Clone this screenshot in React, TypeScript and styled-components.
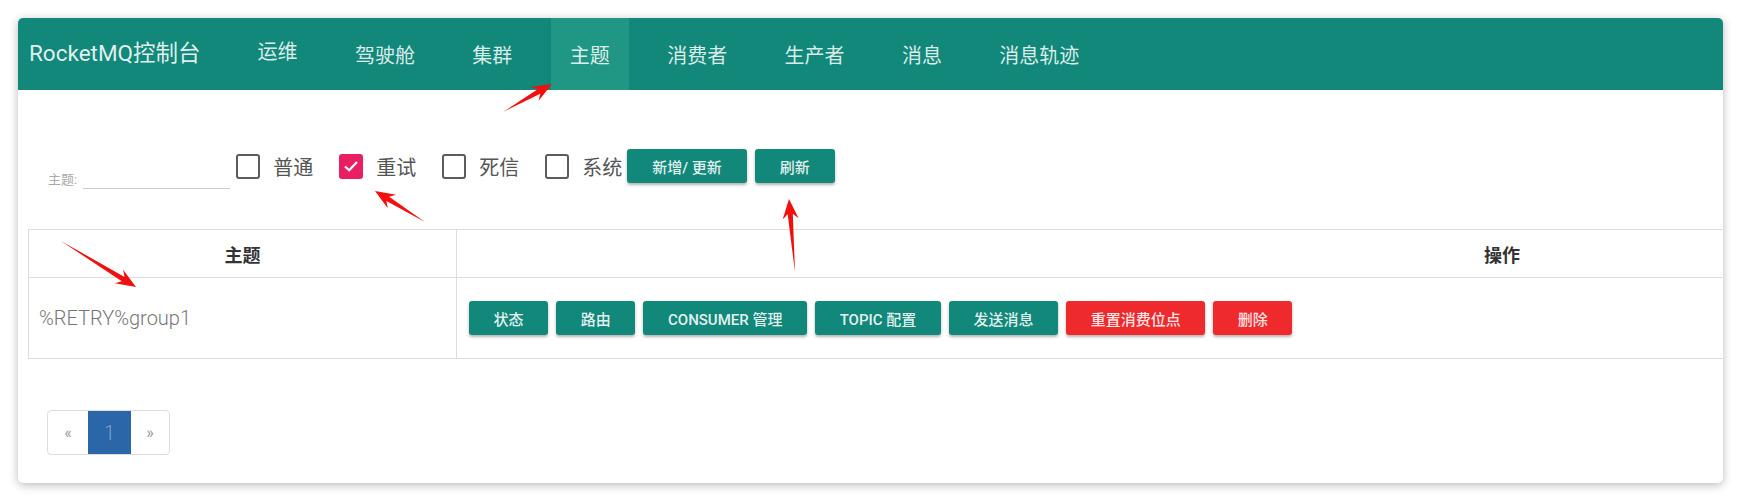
import React from "react";
import styled, { createGlobalStyle, css } from "styled-components";

const GlobalStyle = createGlobalStyle`
  html, body {
    margin: 0;
    padding: 0;
    background: #ffffff;
  }
  body {
    font-family: "Roboto", "Noto Sans CJK SC", sans-serif;
  }
`;

const Page = styled.div`
  position: relative;
  padding: 18px;
  width: 1741px;
  box-sizing: border-box;
`;

const Card = styled.div`
  width: 1705px;
  height: 465px;
  background: #fff;
  border-radius: 5px;
  overflow: hidden;
  box-shadow: 0 2px 10px rgba(0, 0, 0, 0.28);
`;

const Header = styled.div`
  display: flex;
  align-items: stretch;
  height: 72px;
  background: #12887a;
`;

const Brand = styled.div`
  display: flex;
  align-items: center;
  padding: 0 0 6px 11px;
  font-size: 22.5px;
  color: rgba(255, 255, 255, 0.88);
  margin-right: 38px;
`;

const Nav = styled.div`
  display: flex;
  gap: 19.4px;
`;

const NavItem = styled.div<{ active?: boolean; lift?: boolean }>`
  display: flex;
  align-items: center;
  padding: 0 19px;
  font-size: 20px;
  color: rgba(255, 255, 255, 0.85);
  ${(p) =>
    p.lift &&
    css`
      padding-bottom: 8px;
    `}
  ${(p) =>
    p.active &&
    css`
      background: #1f9784;
    `}
`;

const Content = styled.div`
  padding-left: 10px;
`;

const FilterRow = styled.div`
  display: flex;
  align-items: center;
  height: 34px;
  margin: 59px 0 46px 20px;
`;

const Field = styled.div`
  display: flex;
  align-items: flex-end;
  align-self: flex-end;
  margin-bottom: -6px;
  margin-right: 6px;
`;

const FieldLabel = styled.span`
  font-size: 13px;
  color: #aaa;
  margin-right: 6px;
  line-height: 18px;
`;

const FieldInput = styled.div`
  width: 147px;
  height: 18px;
  border-bottom: 1px solid #ccc;
`;

const Check = styled.label`
  display: flex;
  align-items: center;
  gap: 13px;
  margin-right: 26px;
  font-size: 20px;
  color: #555;
  &:last-of-type {
    margin-right: 5px;
  }
`;

const Box = styled.span<{ checked?: boolean }>`
  display: flex;
  align-items: center;
  justify-content: center;
  width: 24px;
  height: 25px;
  box-sizing: border-box;
  border-radius: 3px;
  border: 2px solid #5c5c5c;
  ${(p) =>
    p.checked &&
    css`
      background: #e91e63;
      border-color: #e91e63;
    `}
`;

const Button = styled.button<{ danger?: boolean; compact?: boolean }>`
  height: 34px;
  padding: 0 ${(p) => (p.compact ? 24.6 : 25)}px;
  border: none;
  border-radius: 3px;
  font-family: "Roboto", "Noto Sans CJK SC", sans-serif;
  font-size: 15px;
  font-weight: 500;
  color: rgba(255, 255, 255, 0.9);
  background: ${(p) => (p.danger ? "#ee2a2d" : "#12887a")};
  box-shadow: 0 2px 3px rgba(0, 0, 0, 0.3);
  white-space: nowrap;
  cursor: pointer;
`;

const Buttons = styled.div`
  display: flex;
  gap: 8px;
`;

const Table = styled.table`
  width: 2520px;
  border-collapse: collapse;
  table-layout: fixed;
`;

const Th = styled.th<{ w?: number }>`
  height: 47px;
  padding: 0;
  border: 1px solid #ddd;
  font-size: 18px;
  font-weight: 700;
  color: #333;
  text-align: center;
  ${(p) =>
    p.w &&
    css`
      width: ${p.w}px;
    `}
`;

const Td = styled.td<{ text?: boolean }>`
  height: 80px;
  border: 1px solid #ddd;
  padding: 0 0 0 ${(p) => (p.text ? 10 : 12)}px;
  font-size: 20px;
  font-weight: 300;
  color: #777;
`;

const Pager = styled.div`
  display: inline-flex;
  margin: 51px 0 0 19px;
  border: 1px solid #ddd;
  border-radius: 4px;
  overflow: hidden;
  height: 43px;
`;

const PageCell = styled.div<{ active?: boolean; w: number }>`
  display: flex;
  align-items: center;
  justify-content: center;
  width: ${(p) => p.w}px;
  font-size: 16px;
  color: #999;
  ${(p) =>
    p.active &&
    css`
      background: #2a66a8;
      color: rgba(255, 255, 255, 0.4);
      font-size: 20px;
      font-weight: 300;
    `}
`;

const Overlay = styled.svg`
  position: absolute;
  left: 0;
  top: 0;
  pointer-events: none;
`;

type Pt = [number, number];

const arrowPoints = (tail: Pt, tip: Pt) => {
  const dx = tip[0] - tail[0];
  const dy = tip[1] - tail[1];
  const len = Math.hypot(dx, dy);
  const ux = dx / len;
  const uy = dy / len;
  const nx = -uy;
  const ny = ux;
  const h = 20;
  const w = 8;
  const s = 2.6;
  const at = (d: number, o: number): Pt => [
    tip[0] - ux * d + nx * o,
    tip[1] - uy * d + ny * o,
  ];
  const pts: Pt[] = [
    tail,
    at(h * 0.75, s),
    at(h, w),
    tip,
    at(h, -w),
    at(h * 0.75, -s),
  ];
  return pts.map((p) => p.join(",")).join(" ");
};

const arrows: [Pt, Pt][] = [
  [[503, 112], [552, 84]],
  [[425, 222], [375, 191]],
  [[795, 272], [789, 199]],
  [[61, 241], [136, 287]],
];

const Tick = () => (
  <svg width="18" height="18" viewBox="0 0 18 18">
    <path d="M3 9.5 L7.2 13.2 L15 5" fill="none" stroke="#fff" strokeWidth="2.2" />
  </svg>
);

const navItems = ["运维", "驾驶舱", "集群", "主题", "消费者", "生产者", "消息", "消息轨迹"];
const filters = [
  { label: "普通", checked: false },
  { label: "重试", checked: true },
  { label: "死信", checked: false },
  { label: "系统", checked: false },
];
const actions = [
  { label: "状态" },
  { label: "路由" },
  { label: "CONSUMER 管理" },
  { label: "TOPIC 配置" },
  { label: "发送消息" },
  { label: "重置消费位点", danger: true },
  { label: "删除", danger: true },
];

const App = () => {
  return (
    <Page>
      <GlobalStyle />
      <Card>
        <Header>
          <Brand>RocketMQ控制台</Brand>
          <Nav>
            {navItems.map((item, i) => (
              <NavItem key={item} active={item === "主题"} lift={i === 0}>
                {item}
              </NavItem>
            ))}
          </Nav>
        </Header>
        <Content>
          <FilterRow>
            <Field>
              <FieldLabel>主题:</FieldLabel>
              <FieldInput />
            </Field>
            {filters.map((f) => (
              <Check key={f.label}>
                <Box checked={f.checked}>{f.checked && <Tick />}</Box>
                {f.label}
              </Check>
            ))}
            <Buttons>
              <Button>新增/ 更新</Button>
              <Button>刷新</Button>
            </Buttons>
          </FilterRow>
          <Table>
            <thead>
              <tr>
                <Th w={427}>主题</Th>
                <Th>操作</Th>
              </tr>
            </thead>
            <tbody>
              <tr>
                <Td text>%RETRY%group1</Td>
                <Td>
                  <Buttons>
                    {actions.map((a) => (
                      <Button key={a.label} danger={a.danger} compact>
                        {a.label}
                      </Button>
                    ))}
                  </Buttons>
                </Td>
              </tr>
            </tbody>
          </Table>
          <Pager>
            <PageCell w={40}>«</PageCell>
            <PageCell w={43} active>
              1
            </PageCell>
            <PageCell w={38}>»</PageCell>
          </Pager>
        </Content>
      </Card>
      <Overlay width="1741" height="501">
        {arrows.map(([tail, tip], i) => (
          <polygon key={i} points={arrowPoints(tail, tip)} fill="#f20f0f" />
        ))}
      </Overlay>
    </Page>
  );
};

export default App;
